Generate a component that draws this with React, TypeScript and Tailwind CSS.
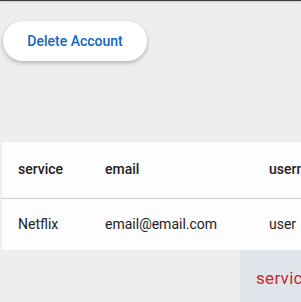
const rows = [{ service: "Netflix", email: "email@email.com", username: "user" }];

export default function App() {
  return (
    <div className="relative h-[302px] w-full overflow-hidden bg-[#eeeeee] font-['Roboto',sans-serif]">
      {/* top edge */}
      <div className="h-px w-full bg-[#3d3d3d] shadow-[0_1px_2px_rgba(0,0,0,0.25)]" />

      <div className="pl-[3px] pt-[20px]">
        <button className="h-[40px] w-[144px] rounded-full bg-white text-[14px] font-medium text-[#1565c0] shadow-[0_2px_4px_rgba(0,0,0,0.25)]">
          Delete Account
        </button>
      </div>

      <div className="ml-[2px] mt-[81px] w-[420px] bg-[#fdfcfe]">
        <table className="w-full table-fixed border-collapse text-left text-[14px] text-[#222]">
          <thead>
            <tr className="h-[56px] border-b border-[#d0d0d0]">
              <th className="w-[87px] pl-4 font-medium">service</th>
              <th className="w-[164px] pl-4 font-medium">email</th>
              <th className="pl-4 font-medium">username</th>
            </tr>
          </thead>
          <tbody>
            {rows.map((r) => (
              <tr key={r.service} className="h-[52px]">
                <td className="pl-4">{r.service}</td>
                <td className="pl-4">{r.email}</td>
                <td className="pl-4">{r.username}</td>
              </tr>
            ))}
          </tbody>
        </table>
      </div>

      <div className="ml-[240px] flex h-[60px] w-[200px] items-center bg-[#e1e5eb] pl-4 pb-[2px] text-[17px] tracking-[0.3px] text-[#c62828]">
        service
      </div>
    </div>
  );
}
